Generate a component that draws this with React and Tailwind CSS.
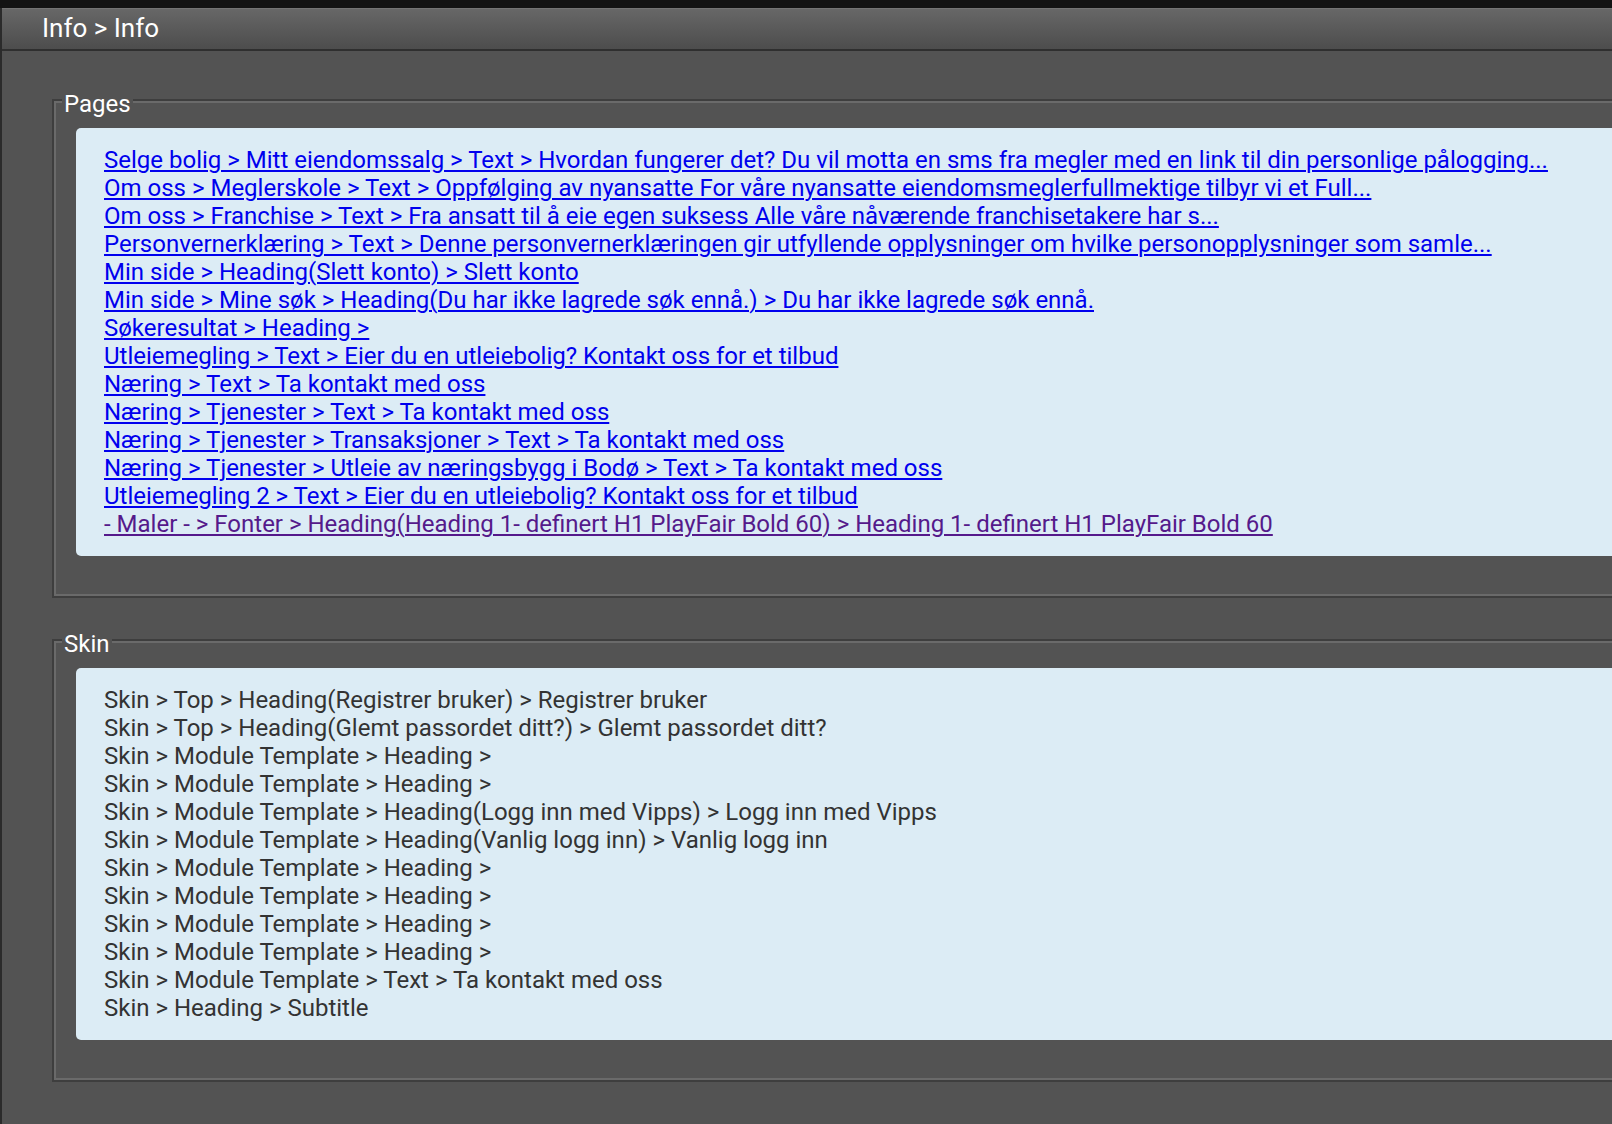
import React from "react";

const pages = [
  { text: "Selge bolig > Mitt eiendomssalg > Text > Hvordan fungerer det? Du vil motta en sms fra megler med en link til din personlige pålogging..." },
  { text: "Om oss > Meglerskole > Text > Oppfølging av nyansatte For våre nyansatte eiendomsmeglerfullmektige tilbyr vi et Full..." },
  { text: "Om oss > Franchise > Text > Fra ansatt til å eie egen suksess Alle våre nåværende franchisetakere har s..." },
  { text: "Personvernerklæring > Text > Denne personvernerklæringen gir utfyllende opplysninger om hvilke personopplysninger som samle..." },
  { text: "Min side > Heading(Slett konto) > Slett konto" },
  { text: "Min side > Mine søk > Heading(Du har ikke lagrede søk ennå.) > Du har ikke lagrede søk ennå." },
  { text: "Søkeresultat > Heading >" },
  { text: "Utleiemegling > Text > Eier du en utleiebolig? Kontakt oss for et tilbud" },
  { text: "Næring > Text > Ta kontakt med oss" },
  { text: "Næring > Tjenester > Text > Ta kontakt med oss" },
  { text: "Næring > Tjenester > Transaksjoner > Text > Ta kontakt med oss" },
  { text: "Næring > Tjenester > Utleie av næringsbygg i Bodø > Text > Ta kontakt med oss" },
  { text: "Utleiemegling 2 > Text > Eier du en utleiebolig? Kontakt oss for et tilbud" },
  { text: "- Maler - > Fonter > Heading(Heading 1- definert H1 PlayFair Bold 60) > Heading 1- definert H1 PlayFair Bold 60", visited: true },
];

const skin = [
  "Skin > Top > Heading(Registrer bruker) > Registrer bruker",
  "Skin > Top > Heading(Glemt passordet ditt?) > Glemt passordet ditt?",
  "Skin > Module Template > Heading >",
  "Skin > Module Template > Heading >",
  "Skin > Module Template > Heading(Logg inn med Vipps) > Logg inn med Vipps",
  "Skin > Module Template > Heading(Vanlig logg inn) > Vanlig logg inn",
  "Skin > Module Template > Heading >",
  "Skin > Module Template > Heading >",
  "Skin > Module Template > Heading >",
  "Skin > Module Template > Heading >",
  "Skin > Module Template > Text > Ta kontakt med oss",
  "Skin > Heading > Subtitle",
];

function Group({ title, children, className = "" }) {
  return (
    <fieldset
      className={`mr-[-120px] ml-[50px] border-2 border-[#3e3e3e] px-[7px] pt-[10px] pb-[40px] shadow-[inset_0_0_0_2px_#6a6a6a] ${className}`}
    >
      <legend className="ml-px bg-[#535353] px-[2px] pt-2 text-[24px] leading-[28px] text-white">
        {title}
      </legend>
      <div className="ml-[15px] rounded-[5px] bg-[#dcecf5] py-[18px] pl-[28px] text-[24px] leading-[28px]">
        {children}
      </div>
    </fieldset>
  );
}

export default function App() {
  return (
    <div className="min-h-screen w-full overflow-hidden bg-[#131313] pt-2 font-['Roboto',sans-serif]">
      <div className="min-h-[1116px] border-l-2 border-[#2b2b2b] bg-[#535353] pb-10">
        {/* header bar */}
        <header className="h-[43px] border-t border-b-2 border-t-[#747474] border-b-[#2f2f2f] bg-gradient-to-b from-[#676767] to-[#4d4d4d] pl-[40px] text-[26px] leading-[39px] text-white">
          Info &gt; Info
        </header>

        <div className="pt-[31px]">
          <Group title="Pages">
            {pages.map((p, i) => (
              <div key={i}>
                <a
                  href="#"
                  className={`underline decoration-2 underline-offset-[2px] ${p.visited ? "text-[#551a8b]" : "text-[#0000ee]"}`}
                >
                  {p.text}
                </a>
              </div>
            ))}
          </Group>

          <Group title="Skin" className="mt-6">
            {skin.map((s, i) => (
              <div key={i} className="text-[#333333]">
                {s}
              </div>
            ))}
          </Group>
        </div>
      </div>
    </div>
  );
}
